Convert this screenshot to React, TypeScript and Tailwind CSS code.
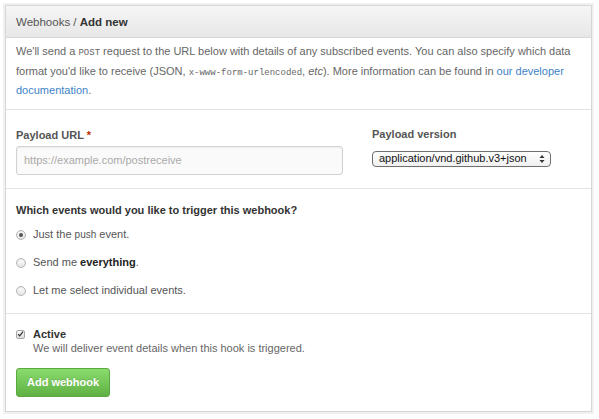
import React from "react";

function Radio({ checked }: { checked?: boolean }) {
  return (
    <span className="flex h-[10px] w-[10px] shrink-0 items-center justify-center rounded-full border border-[#b5b5b5] bg-gradient-to-b from-[#fdfdfd] to-[#e4e4e4] shadow-[inset_0_1px_1px_rgba(0,0,0,0.08)]">
      {checked && <span className="h-[4px] w-[4px] rounded-full bg-[#555]" />}
    </span>
  );
}

function Checkbox() {
  return (
    <span className="flex h-[9px] w-[9px] shrink-0 items-center justify-center rounded-[2px] border border-[#a8a8a8] bg-gradient-to-b from-[#f8f8f8] to-[#dcdcdc]">
      <svg width="8" height="8" viewBox="0 0 8 8">
        <path d="M1.2 4.2 L3.1 6.2 L6.9 1.3" fill="none" stroke="#333" strokeWidth="1.4" />
      </svg>
    </span>
  );
}

export default function App() {
  return (
    <div className="min-h-[419px] w-[599px] bg-white px-[5px] pt-[5px] font-['Liberation_Sans',Arial,sans-serif] text-[11px] text-[#555]">
      <div className="w-[587px] border border-[#d6d6d6] bg-white shadow-[0_0_0_2px_#f1f1f1]">
        {/* Header */}
        <div className="flex h-[32px] items-center border-b border-[#d8d8d8] bg-gradient-to-b from-[#f6f6f6] to-[#e7e7e7] pl-[10px] pt-[2px] text-[11.5px] text-[#555]">
          Webhooks /&nbsp;<span className="font-bold text-[#333]">Add new</span>
        </div>

        {/* Description */}
        <div className="border-b border-[#e3e3e3] px-[10px] pb-[8px] pt-[4px] leading-[19.5px] text-[#666]">
          We&apos;ll send a <code className="font-['Liberation_Mono',monospace] text-[9px] leading-none">POST</code> request to
          the URL below with details of any subscribed events. You can also specify which data format you&apos;d like to
          receive (JSON,{" "}
          <code className="font-['Liberation_Mono',monospace] text-[9px] leading-none">x-www-form-urlencoded</code>,{" "}
          <em>etc</em>). More information can be found in{" "}
          <a className="text-[#4183c4]">our developer documentation</a>.
        </div>

        {/* Payload */}
        <div className="flex border-b border-[#e3e3e3] px-[10px] pb-[13px]">
          <div className="w-[327px] pt-[18px]">
            <div className="leading-[14px] font-bold text-[#555]">
              Payload URL <span className="text-[#bd2c00]">*</span>
            </div>
            <div className="mt-[4px] flex h-[29px] items-center rounded-[3px] border border-[#d2d2d2] bg-[#fafafa] pl-[7px] text-[#aaa] shadow-[inset_0_1px_2px_rgba(0,0,0,0.06)]">
              https://example.com/postreceive
            </div>
          </div>
          <div className="ml-[29px] pt-[17px]">
            <div className="leading-[14px] font-bold text-[#555]">Payload version</div>
            <div className="mt-[10px] flex h-[16px] w-[179px] items-center justify-between rounded-[4px] border border-[#6f6f6f] bg-gradient-to-b from-white to-[#f0f0f0] pl-[6px] pr-[5px] text-[11px] text-[#111]">
              <span>application/vnd.github.v3+json</span>
              <svg width="6" height="10" viewBox="0 0 6 10">
                <path d="M3 1 L5.5 4 L0.5 4 Z" fill="#333" />
                <path d="M3 9 L5.5 6 L0.5 6 Z" fill="#333" />
              </svg>
            </div>
          </div>
        </div>

        {/* Events */}
        <div className="border-b border-[#e3e3e3] px-[10px] pb-[8px] pt-[14px]">
          <div className="leading-[14px] font-bold text-[#333]">Which events would you like to trigger this webhook?</div>
          <div className="mt-[4px] flex flex-col">
            <label className="flex h-[28px] items-center gap-[7px]">
              <Radio checked />
              <span>
                Just the <span className="text-[10px]">push</span> event.
              </span>
            </label>
            <label className="flex h-[28px] items-center gap-[7px]">
              <Radio />
              <span>
                Send me <strong className="text-[#222]">everything</strong>.
              </span>
            </label>
            <label className="flex h-[28px] items-center gap-[7px]">
              <Radio />
              <span>Let me select individual events.</span>
            </label>
          </div>
        </div>

        {/* Active + submit */}
        <div className="px-[10px] pb-[14px] pt-[13px]">
          <div className="flex items-start gap-[8px]">
            <div className="mt-[3px]">
              <Checkbox />
            </div>
            <div className="leading-[14.5px]">
              <div className="font-bold text-[#333]">Active</div>
              <div className="text-[#666]">We will deliver event details when this hook is triggered.</div>
            </div>
          </div>
          <button className="mt-[12px] h-[29px] rounded-[3px] border border-[#5ca941] bg-gradient-to-b from-[#8add6d] to-[#60b044] px-[10px] text-[11px] font-bold text-white [text-shadow:0_-1px_0_rgba(0,0,0,0.15)]">
            Add webhook
          </button>
        </div>
      </div>
    </div>
  );
}
